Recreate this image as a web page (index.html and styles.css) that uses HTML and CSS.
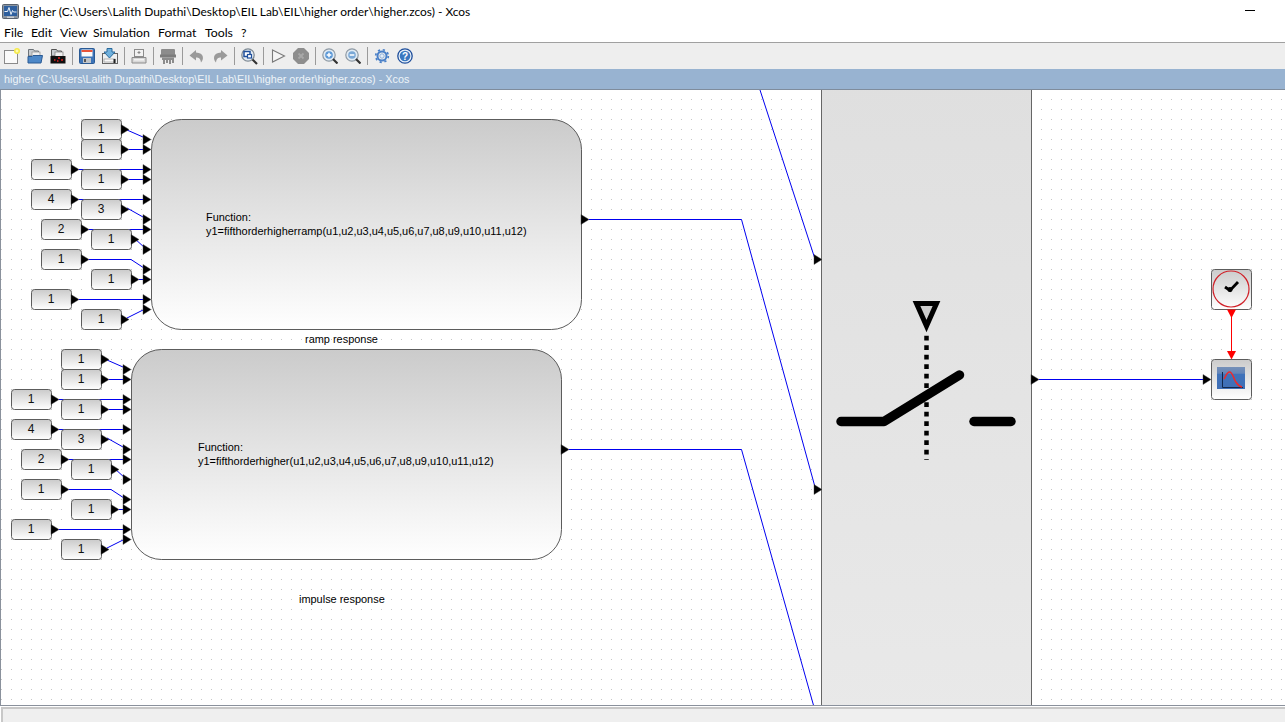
FILE: index.html
```html
<!DOCTYPE html>
<html lang="en">
<head>
<meta charset="utf-8">
<title>higher - Xcos</title>
<link rel="stylesheet" href="styles.css">
</head>
<body>
<div class="app">
  <header class="titlebar">
    <svg class="app-icon" viewBox="0 0 17 15"><rect x="0.500" y="0.500" width="16" height="14" rx="1" fill="#8a94a0" stroke="#59626e"/><rect x="2" y="2" width="13" height="10" fill="#2e5f9e"/><rect x="5" y="12.500" width="7" height="1.500" fill="#c9ced4"/><path d="M2.500 7.500h3l1.500-4 2 7 1.500-4 1 1.500h3" fill="none" stroke="#e8f0f8" stroke-width="1"/></svg>
    <span class="title-text">higher (C:\Users\Lalith Dupathi\Desktop\EIL Lab\EIL\higher order\higher.zcos) - Xcos</span>
    <span class="minimize"></span>
  </header>
  <nav class="menubar">
    <span class="menu-file">File</span><span class="menu-edit">Edit</span><span class="menu-view">View</span><span class="menu-sim">Simulation</span><span class="menu-format">Format</span><span class="menu-tools">Tools</span><span>?</span>
  </nav>
  <div class="toolbar">
    <svg class="tool" viewBox="0 0 16 16"><rect x="0.500" y="2.500" width="13" height="13" fill="#fafafa" stroke="#8a8a8a"/><circle cx="13" cy="3" r="3" fill="#f5e94a"/><circle cx="13" cy="3" r="1.400" fill="#fffbb0"/></svg>
    <svg class="tool" viewBox="0 0 16 16"><path d="M1.500 1.500h5l1 1.500h4v5h-10z" fill="#c8ccd0" stroke="#6c7278"/><rect x="5" y="4" width="8" height="6" fill="#f0f0f0" stroke="#8a8a8a" stroke-width="0.700"/><path d="M1 15V8.500h4l1-1h9.500L14 15z" fill="#4d88c8" stroke="#2a5a94"/></svg>
    <svg class="tool" viewBox="0 0 16 16"><path d="M1.500 1.500h5l1 1.500h4v5h-10z" fill="#c8ccd0" stroke="#555"/><rect x="5" y="4" width="8" height="5" fill="#f0f0f0" stroke="#777" stroke-width="0.700"/><rect x="0.500" y="8" width="15" height="7.500" fill="#101010"/><path d="M4 12h1.500M8 10h2M7 13h1.500M11 12h2" stroke="#e02020" stroke-width="1.500"/></svg>
    <i class="sep"></i>
    <svg class="tool" viewBox="0 0 16 16"><rect x="0.500" y="0.500" width="15" height="15" rx="1" fill="#3d74b8" stroke="#2a5a94"/><rect x="2.500" y="1.500" width="11" height="7" fill="#fafafa"/><rect x="2.500" y="2" width="11" height="2" fill="#e8543a"/><rect x="4" y="10" width="8" height="5" fill="#c0c4c8"/><rect x="5" y="11" width="2" height="3" fill="#555"/></svg>
    <svg class="tool" viewBox="0 0 16 16"><rect x="0.500" y="5.500" width="15" height="10" fill="#eef0f0" stroke="#666"/><rect x="2" y="11" width="11" height="3" fill="#f8f8f8" stroke="#888" stroke-width="0.600"/><rect x="11.500" y="11" width="2" height="4" fill="#222"/><path d="M5 0.500h5v3.500h3l-5.500 6L2 4h3z" fill="#6fb0dc" stroke="#2a6a9c"/></svg>
    <i class="sep"></i>
    <svg class="tool" viewBox="0 0 16 16"><rect x="3.500" y="1.500" width="9" height="7" fill="#f2f2f2" stroke="#8c8c8c"/><path d="M8 3v3M6.500 4.500h3" stroke="#888"/><path d="M1 9.500h14v5.500H1z" fill="#d8d8d8" stroke="#8c8c8c"/><rect x="3" y="11" width="10" height="1.500" fill="#f4f4f4"/></svg>
    <i class="sep"></i>
    <svg class="tool" viewBox="0 0 16 16"><rect x="1" y="1" width="14" height="6.500" rx="1" fill="#8c8c8c"/><rect x="0" y="6.500" width="16" height="3" fill="#7c7c7c"/><path d="M2 9.500h12V15H12v-3H11v4H9v-4H8v3H6v-3H5v4H3v-4H2z" fill="#8c8c8c"/></svg>
    <i class="sep"></i>
    <svg class="tool" viewBox="0 0 16 16"><path d="M7 2L0.500 7.500 7 12.500V9.500c3 0 4.500 1 5 5 3-3 3.500-9.500-5-10z" fill="#9a9a9a"/></svg>
    <svg class="tool" viewBox="0 0 16 16"><path d="M9 2l6.500 5.500L9 12.500V9.500c-3 0-4.500 1-5 5-3-3-3.500-9.500 5-10z" fill="#9a9a9a"/></svg>
    <i class="sep"></i>
    <svg class="tool tool-wide" viewBox="0 0 17 17"><circle cx="7" cy="7" r="6.200" fill="#e4ecf4" stroke="#7f8a94" stroke-width="1.300"/><rect x="3" y="3.500" width="6" height="5" fill="#fff" stroke="#1f4f9c" stroke-width="1.500"/><rect x="6.500" y="6.500" width="4" height="3.500" fill="#fff" stroke="#1f4f9c" stroke-width="1.200"/><path d="M11.500 11.500l4.500 4.500" stroke="#333" stroke-width="2.200"/></svg>
    <i class="sep"></i>
    <svg class="tool" viewBox="0 0 16 16"><path d="M2.500 2L14.500 8 2.500 14z" fill="#f4f4f4" stroke="#7a7a7a" stroke-width="1.100"/></svg>
    <svg class="tool" viewBox="0 0 16 16"><path d="M5 0h6l5 5v6l-5 5H5l-5-5V5z" fill="#8e8e8e"/><path d="M5.500 5.500l5 5M10.500 5.500l-5 5" stroke="#a8a8a8" stroke-width="1.800"/></svg>
    <i class="sep"></i>
    <svg class="tool" viewBox="0 0 16 16"><circle cx="7" cy="7" r="6.200" fill="#dfeaf4" stroke="#8f9aa4" stroke-width="1.200"/><circle cx="7" cy="7" r="3.800" fill="#5c98d6"/><path d="M4.700 7h4.600M7 4.700v4.600" stroke="#fff" stroke-width="1.500"/><path d="M11 11l4.500 4.500" stroke="#333" stroke-width="2.200"/></svg>
    <svg class="tool" viewBox="0 0 16 16"><circle cx="7" cy="7" r="6.200" fill="#dfeaf4" stroke="#8f9aa4" stroke-width="1.200"/><circle cx="7" cy="7" r="3.800" fill="#7aa8d6"/><path d="M4.700 7h4.600" stroke="#fff" stroke-width="1.500"/><path d="M11 11l4.500 4.500" stroke="#333" stroke-width="2.200"/></svg>
    <i class="sep"></i>
    <svg class="tool" viewBox="0 0 16 16"><circle cx="8" cy="8" r="4.500" fill="none" stroke="#4a80c8" stroke-width="2"/><circle cx="8" cy="8" r="6.300" fill="none" stroke="#4a80c8" stroke-width="1.700" stroke-dasharray="2.200 2.750"/><circle cx="8" cy="8" r="2.200" fill="#e4eef8" stroke="#7aa0d0" stroke-width="0.800"/></svg>
    <svg class="tool" viewBox="0 0 16 16"><circle cx="8" cy="8" r="7.200" fill="#e8f0f8" stroke="#1f4f9c" stroke-width="1.300"/><circle cx="8" cy="8" r="5.300" fill="#3a78c0"/><text class="help-mark" x="8" y="12" text-anchor="middle">?</text></svg>
  </div>
  <div class="tabbar">higher (C:\Users\Lalith Dupathi\Desktop\EIL Lab\EIL\higher order\higher.zcos) - Xcos</div>
  <main class="canvas">
    <svg class="diagram" viewBox="0 90 1285 615" width="1285" height="615">
      <defs>
        <pattern id="grid" x="1" y="9" width="10" height="10" patternUnits="userSpaceOnUse"><rect width="1" height="1" fill="#c6c6c6"/></pattern>
        <linearGradient id="blockfill" x1="0" y1="0" x2="0" y2="1"><stop offset="0" stop-color="#cbcbcb"/><stop offset="1" stop-color="#ffffff"/></linearGradient>
        <linearGradient id="switchfill" x1="0" y1="0" x2="0" y2="1"><stop offset="0" stop-color="#dfdfdf"/><stop offset="1" stop-color="#e9e9e9"/></linearGradient>
        <linearGradient id="scopefill" x1="0" y1="0" x2="0" y2="1"><stop offset="0" stop-color="#7590b8"/><stop offset="0.28" stop-color="#6485b8"/><stop offset="0.34" stop-color="#3f72ba"/><stop offset="1" stop-color="#3f6fb6"/></linearGradient>
        <g id="out"><polygon class="port" points="0,-5 8,0 0,5"/></g>
        <g id="group">
          <g class="wires">
            <path d="M127 130L143 137"/>
            <path d="M129 149.500H143"/>
            <path d="M79 169.500H143"/>
            <path d="M129 179.500H143"/>
            <path d="M79 199.500H143"/>
            <path d="M127 208L143 217"/>
            <path d="M89 229.500H143"/>
            <path d="M134 238L145 248"/>
            <path d="M89 259.500H131L144 268"/>
            <path d="M139 279.500H143"/>
            <path d="M79 299.500H143"/>
            <path d="M127 318L143 310"/>
          </g>
          <rect class="block" x="151.500" y="119.500" width="430" height="210" rx="30"/>
          <rect class="block" x="81.500" y="119.500" width="40" height="20" rx="3"/>
          <rect class="block" x="81.500" y="139.500" width="40" height="20" rx="3"/>
          <rect class="block" x="31.500" y="159.500" width="40" height="20" rx="3"/>
          <rect class="block" x="81.500" y="169.500" width="40" height="20" rx="3"/>
          <rect class="block" x="31.500" y="189.500" width="40" height="20" rx="3"/>
          <rect class="block" x="81.500" y="199.500" width="40" height="20" rx="3"/>
          <rect class="block" x="41.500" y="219.500" width="40" height="20" rx="3"/>
          <rect class="block" x="91.500" y="229.500" width="40" height="20" rx="3"/>
          <rect class="block" x="41.500" y="249.500" width="40" height="20" rx="3"/>
          <rect class="block" x="91.500" y="269.500" width="40" height="20" rx="3"/>
          <rect class="block" x="31.500" y="289.500" width="40" height="20" rx="3"/>
          <rect class="block" x="81.500" y="309.500" width="40" height="20" rx="3"/>
          <g class="digits">
            <text x="101" y="133">1</text>
            <text x="101" y="153">1</text>
            <text x="51" y="173">1</text>
            <text x="101" y="183">1</text>
            <text x="51" y="203">4</text>
            <text x="101" y="213">3</text>
            <text x="61" y="233">2</text>
            <text x="111" y="243">1</text>
            <text x="61" y="263">1</text>
            <text x="111" y="283">1</text>
            <text x="51" y="303">1</text>
            <text x="101" y="323">1</text>
          </g>
          <use href="#out" x="121" y="129.500"/><use href="#out" x="121" y="149.500"/>
          <use href="#out" x="71" y="169.500"/><use href="#out" x="121" y="179.500"/>
          <use href="#out" x="71" y="199.500"/><use href="#out" x="121" y="209.500"/>
          <use href="#out" x="81" y="229.500"/><use href="#out" x="131" y="239.500"/>
          <use href="#out" x="81" y="259.500"/><use href="#out" x="131" y="279.500"/>
          <use href="#out" x="71" y="299.500"/><use href="#out" x="121" y="319.500"/>
          <use href="#out" x="143" y="139.500"/><use href="#out" x="143" y="149.500"/>
          <use href="#out" x="143" y="169.500"/><use href="#out" x="143" y="179.500"/>
          <use href="#out" x="143" y="199.500"/><use href="#out" x="143" y="219.500"/>
          <use href="#out" x="143" y="229.500"/><use href="#out" x="143" y="249.500"/>
          <use href="#out" x="143" y="269.500"/><use href="#out" x="143" y="279.500"/>
          <use href="#out" x="143" y="299.500"/><use href="#out" x="143" y="309.500"/>
          <use href="#out" x="581" y="219.500"/>
        </g>
      </defs>
      <rect x="0" y="90" width="1285" height="615" fill="#fff"/>
      <rect x="0" y="90" width="1285" height="615" fill="url(#grid)"/>

      <g class="wires">
        <path d="M760 90L815 259"/>
        <path d="M589 219.500H741.500L815 487"/>
        <path d="M569 449.500H741.500L814 707"/>
        <path d="M1039 379.500H1204"/>
      </g>

      <use href="#group"/>
      <use href="#group" x="-20" y="230"/>

      <g class="labels">
        <text x="206" y="221">Function:</text>
        <text x="206" y="235">y1=fifthorderhigherramp(u1,u2,u3,u4,u5,u6,u7,u8,u9,u10,u11,u12)</text>
        <text x="305" y="343">ramp response</text>
        <text x="198" y="451">Function:</text>
        <text x="198" y="465">y1=fifthorderhigher(u1,u2,u3,u4,u5,u6,u7,u8,u9,u10,u11,u12)</text>
        <text x="299" y="603">impulse response</text>
      </g>

      <rect class="switch" x="821.500" y="80" width="210" height="640"/>
      <use href="#out" x="814" y="259.500"/>
      <use href="#out" x="814" y="489.500"/>
      <use href="#out" x="1031" y="379.500"/>
      <use href="#out" x="1203" y="379.500"/>
      <path d="M916.500 303.500H936.500L926.500 326z" fill="#ccc" stroke="#000" stroke-width="5"/>
      <path d="M926.500 335.700V460" stroke="#000" stroke-width="4.500" stroke-dasharray="4.700 4.800" fill="none"/>
      <path d="M841 421.500H884L959.500 375" class="switch-arm"/>
      <path d="M974 421.500H1011" class="switch-arm"/>

      <rect class="block" x="1211.500" y="269.500" width="40" height="40" rx="3"/>
      <circle cx="1231" cy="289" r="18" fill="none" stroke="#d02028" stroke-width="1.200"/>
      <path d="M1225 287l5 3.500 8-8.500" fill="none" stroke="#000" stroke-width="2.800"/>
      <circle cx="1230" cy="289.500" r="2.500" fill="#000"/>
      <path d="M1231.500 314V352" stroke="#f00" stroke-width="1" fill="none"/>
      <polygon points="1227,309.500 1236,309.500 1231.500,318" fill="#f00"/>
      <polygon points="1227,351 1236,351 1231.500,359.500" fill="#f00"/>
      <rect class="block" x="1211.500" y="359.500" width="40" height="40" rx="3"/>
      <rect x="1217" y="367" width="28" height="22" fill="url(#scopefill)"/>
      <path d="M1222.500 372V387.500H1243" fill="none" stroke="#12284c" stroke-width="1"/>
      <path d="M1224 379c2-3 3-7 5.500-7 3 0 3.500 5 6 9.500 2 3 3 5 6.500 5.500" fill="none" stroke="#ee2a2a" stroke-width="1.500"/>
    </svg>
  </main>
  <footer class="statusbar"></footer>
</div>
</body>
</html>
```

FILE: styles.css
```css
* { box-sizing: border-box; }
html, body { margin: 0; padding: 0; background: #fff; }
.app { width: 1285px; height: 722px; display: flex; flex-direction: column; overflow: hidden; font-family: Lato, "Noto Sans", sans-serif; color: #000; }

.titlebar { height: 22px; display: flex; align-items: center; padding-left: 2px; background: #fff; }
.app-icon { width: 17px; height: 15px; margin-top: 1px; flex: none; }
.title-text { margin-left: 4px; font-size: 11.950px; white-space: nowrap; }
.minimize { width: 10px; height: 1px; background: #000; margin-left: auto; margin-right: 30px; margin-top: -2px; }

.menubar { height: 21px; display: flex; align-items: center; padding-left: 4px; font-size: 12.300px; background: #fff; border-bottom: 1px solid #a0a0a0; }
.menubar span { display: block; }
.menu-file { width: 27px; }
.menu-edit { width: 29px; }
.menu-view { width: 33px; }
.menu-sim { width: 65px; }
.menu-format { width: 47px; }
.menu-tools { width: 36px; }

.toolbar { height: 26px; display: flex; align-items: center; gap: 7px; padding-left: 4px; background: #eeeeee; }
.tool { width: 16px; height: 16px; flex: none; }
.tool-wide { width: 17px; height: 17px; margin-right: -1px; }
.sep { width: 1px; height: 18px; background: #9a9a9a; margin: 0 -1px; flex: none; }
.help-mark { font: bold 10px "Liberation Sans", sans-serif; fill: #fff; }

.tabbar { height: 21px; padding-left: 4px; background: #98b3d1; border-bottom: 1px solid #7f8c9c; color: #eef3f8; font: 10.800px/20px "Liberation Sans", sans-serif; white-space: nowrap; }

.canvas { height: 616px; flex: none; border-left: 1px solid #8a919c; border-bottom: 1px solid #8a919c; overflow: hidden; }
.diagram { display: block; margin-left: -1px; }

.wires path { fill: none; stroke: #0000f0; stroke-width: 1; }
.port { fill: #000; stroke: #444; stroke-width: 0.400; }
.block { fill: url(#blockfill); stroke: #5c5c5c; stroke-width: 1; }
.digits text { font: 12px "Liberation Sans", sans-serif; text-anchor: middle; fill: #111; }
.labels text { font: 10.950px "Liberation Sans", sans-serif; fill: #000; }
.switch { fill: url(#switchfill); stroke: #666; stroke-width: 1; }
.switch-arm { fill: none; stroke: #000; stroke-width: 9.500; stroke-linecap: round; stroke-linejoin: round; }

.statusbar { flex: 1; margin: 1px 0 0 1px; background: #efefef; border-top: 2px solid #c8c8c8; border-left: 2px solid #c8c8c8; }
```
